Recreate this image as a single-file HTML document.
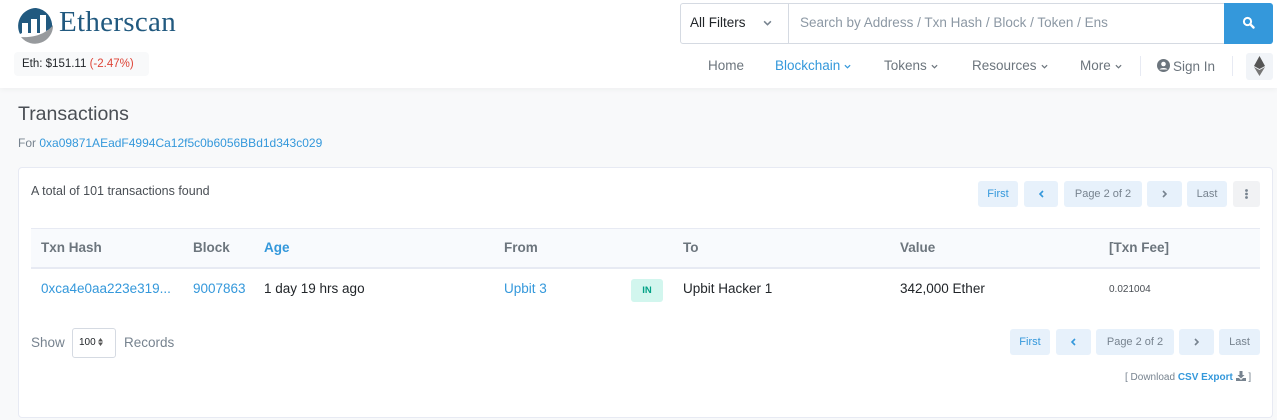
<!DOCTYPE html>
<html><head><meta charset="utf-8"><style>
*{box-sizing:border-box;margin:0;padding:0}
body{width:1277px;height:420px;overflow:hidden;background:#f8f9fa;font-family:"Liberation Sans",Arial,sans-serif;font-size:13.5px;color:#212529;position:relative}
.abs{position:absolute}
.hdr{position:absolute;left:0;top:0;width:1277px;height:88px;background:#fff;box-shadow:0 1px 6px rgba(0,0,0,.05)}
a{color:#3498db;text-decoration:none}
.btn{position:absolute;height:26px;background:#e7f1fb;border-radius:3px;color:#3498db;font-size:11px;line-height:26px;text-align:center}
.btn.g{color:#77838f}
.btn svg{margin-top:9px}
.card{position:absolute;left:18px;top:167px;width:1255px;height:251px;background:#fff;border:1px solid #e7eaf3;border-radius:4px}
.th{font-weight:bold;color:#6c757d;font-size:13.5px}
.chev{display:inline-block;vertical-align:middle;margin-left:4px}
</style></head><body>
<svg width="0" height="0" style="position:absolute"><defs><symbol id="cv" viewBox="0 0 8 5"><path d="M1 1l3 3 3-3" fill="none" stroke="currentColor" stroke-width="1.4"/></symbol></defs></svg>
<div class="hdr">
 <svg class="abs" style="left:17px;top:7px" width="38" height="38" viewBox="0 0 38 38">
  <path d="M19 1a18 18 0 0 0-16 26l2-1V16h6v10h3V12h6v14h3V8h6v16l6-3A18 18 0 0 0 19 1z" fill="#21597f"/>
  <path d="M4 30a18 18 0 0 0 32-12c-6 8-18 13-32 12z" fill="#979a9d"/>
 </svg>
 <div class="abs" style="left:59px;top:6px;font-family:'Liberation Serif',serif;font-size:29px;color:#21597f;letter-spacing:.3px">Etherscan</div>
 <div class="abs" style="left:14px;top:52px;width:135px;height:24px;background:#f8f9fa;border-radius:4px;font-size:11.5px;line-height:24px;padding-left:8px">Eth: $151.11 <span style="color:#de4437">(-2.47%)</span></div>
 <div class="abs" style="left:680px;top:3px;width:545px;height:41px;border:1px solid #d5dae2;border-radius:3px 0 0 3px"></div>
 <div class="abs" style="left:788px;top:3px;width:1px;height:41px;background:#d5dae2"></div>
 <div class="abs" style="left:690px;top:15px;font-size:13.5px">All Filters</div>
 <svg class="abs" style="left:763px;top:20px;color:#77838f" width="9" height="6"><use href="#cv"/></svg>
 <div class="abs" style="left:800px;top:15px;font-size:13.5px;color:#8c98a4">Search by Address / Txn Hash / Block / Token / Ens</div>
 <div class="abs" style="left:1224px;top:3px;width:49px;height:41px;background:#3498db;border-radius:0 3px 3px 0"></div>
 <svg class="abs" style="left:1242px;top:16px" width="13" height="13" viewBox="0 0 13 13"><circle cx="5.5" cy="5.5" r="3.6" fill="none" stroke="#fff" stroke-width="2"/><path d="M8.2 8.2l3.3 3.3" stroke="#fff" stroke-width="2.4" stroke-linecap="round"/></svg>
 <div class="abs" style="top:58px;left:708px;color:#6c757d">Home</div>
 <div class="abs" style="top:58px;left:775px;color:#3498db">Blockchain<svg class="chev" width="7" height="5"><use href="#cv"/></svg></div>
 <div class="abs" style="top:58px;left:884px;color:#6c757d">Tokens<svg class="chev" width="7" height="5"><use href="#cv"/></svg></div>
 <div class="abs" style="top:58px;left:972px;color:#6c757d">Resources<svg class="chev" width="7" height="5"><use href="#cv"/></svg></div>
 <div class="abs" style="top:58px;left:1080px;color:#6c757d">More<svg class="chev" width="7" height="5"><use href="#cv"/></svg></div>
 <div class="abs" style="left:1140px;top:56px;width:1px;height:20px;background:#e7eaf3"></div>
 <svg class="abs" style="left:1157px;top:59px" width="13" height="13" viewBox="0 0 13 13"><circle cx="6.5" cy="6.5" r="6.5" fill="#6c757d"/><circle cx="6.5" cy="5" r="2.3" fill="#fff"/><path d="M2.5 10.5c1-2 7-2 8 0" fill="#fff"/></svg>
 <div class="abs" style="top:59px;left:1173px;color:#6c757d">Sign In</div>
 <div class="abs" style="left:1232px;top:56px;width:1px;height:20px;background:#e7eaf3"></div>
 <div class="abs" style="left:1246px;top:53px;width:27px;height:27px;background:#f1f4f8;border-radius:3px"></div>
 <svg class="abs" style="left:1254px;top:56px" width="11" height="20" viewBox="0 0 11 20"><path d="M5.5 0L0 10l5.5 3 5.5-3z" fill="#555"/><path d="M5.5 14L0 11l5.5 9 5.5-9z" fill="#777"/></svg>
</div>
<div class="abs" style="left:18px;top:103px;font-size:19.5px;color:#4a4f55">Transactions</div>
<div class="abs" style="left:18px;top:136px;font-size:12px;color:#77838f">For <a>0xa09871AEadF4994Ca12f5c0b6056BBd1d343c029</a></div>
<div class="card">
 <div class="abs" style="left:12px;top:16px;font-size:12.5px;color:#4a4f55">A total of 101 transactions found</div>
 <div class="btn" style="left:959px;top:13px;width:40px">First</div>
 <div class="btn" style="left:1005px;top:13px;width:34px"><svg width="5" height="8" viewBox="0 0 5 8"><path d="M4 1L1 4l3 3" fill="none" stroke="#3498db" stroke-width="1.6"/></svg></div>
 <div class="btn g" style="left:1045px;top:13px;width:78px">Page 2 of 2</div>
 <div class="btn" style="left:1128px;top:13px;width:35px"><svg width="5" height="8" viewBox="0 0 5 8"><path d="M1 1l3 3-3 3" fill="none" stroke="#77838f" stroke-width="1.6"/></svg></div>
 <div class="btn g" style="left:1168px;top:13px;width:40px">Last</div>
 <div class="btn g" style="left:1214px;top:13px;width:27px;background:#f1f2f4"><svg width="3" height="10" viewBox="0 0 3 10" style="margin-top:8px"><circle cx="1.5" cy="1.5" r="1.4" fill="#77838f"/><circle cx="1.5" cy="5" r="1.4" fill="#77838f"/><circle cx="1.5" cy="8.5" r="1.4" fill="#77838f"/></svg></div>
 <div class="abs" style="left:12px;top:60px;width:1229px;height:41px;background:#f8fafd;border-top:1px solid #e7eaf3;border-bottom:2px solid #e7eaf3"></div>
 <div class="abs th" style="left:22px;top:72px">Txn Hash</div>
 <div class="abs th" style="left:174px;top:72px">Block</div>
 <div class="abs th" style="left:245px;top:72px;color:#3498db">Age</div>
 <div class="abs th" style="left:485px;top:72px">From</div>
 <div class="abs th" style="left:664px;top:72px">To</div>
 <div class="abs th" style="left:881px;top:72px">Value</div>
 <div class="abs th" style="left:1090px;top:72px">[Txn Fee]</div>
 <div class="abs" style="left:22px;top:113px"><a>0xca4e0aa223e319...</a></div>
 <div class="abs" style="left:174px;top:113px"><a>9007863</a></div>
 <div class="abs" style="left:245px;top:113px">1 day 19 hrs ago</div>
 <div class="abs" style="left:485px;top:113px"><a>Upbit 3</a></div>
 <div class="abs" style="left:612px;top:111px;width:32px;height:23px;background:#d2f6ee;color:#00a186;border-radius:3px;font-size:9.5px;font-weight:bold;text-align:center;line-height:23px">IN</div>
 <div class="abs" style="left:664px;top:113px">Upbit Hacker 1</div>
 <div class="abs" style="left:881px;top:113px">342,000 Ether</div>
 <div class="abs" style="left:1090px;top:116px;font-size:10px;color:#4a4f55">0.021004</div>
 <div class="abs" style="left:12px;top:167px;color:#77838f">Show</div>
 <div class="abs" style="left:53px;top:160px;width:44px;height:30px;border:1px solid #d5dae2;border-radius:3px;font-size:10px;line-height:28px;padding-left:6px">100 <svg width="5" height="8" viewBox="0 0 5 8" style="vertical-align:-1px"><path d="M0 3.5L2.5 0 5 3.5zM0 4.5L2.5 8 5 4.5z" fill="#555"/></svg></div>
 <div class="abs" style="left:105px;top:167px;color:#77838f">Records</div>
 <div class="btn" style="left:991px;top:161px;width:40px">First</div>
 <div class="btn" style="left:1037px;top:161px;width:35px"><svg width="5" height="8" viewBox="0 0 5 8"><path d="M4 1L1 4l3 3" fill="none" stroke="#3498db" stroke-width="1.6"/></svg></div>
 <div class="btn g" style="left:1077px;top:161px;width:78px">Page 2 of 2</div>
 <div class="btn g" style="left:1160px;top:161px;width:35px"><svg width="5" height="8" viewBox="0 0 5 8"><path d="M1 1l3 3-3 3" fill="none" stroke="#77838f" stroke-width="1.6"/></svg></div>
 <div class="btn g" style="left:1200px;top:161px;width:41px">Last</div>
 <div class="abs" style="left:1106px;top:203px;font-size:10px;color:#77838f">[ Download <b style="color:#3498db">CSV Export</b> <svg width="10" height="10" viewBox="0 0 10 10" style="vertical-align:-1px"><path d="M3.5 0h3v4h2L5 7.5 1.5 4h2z" fill="#77838f"/><path d="M0 7h3l2 2 2-2h3v3H0z" fill="#77838f"/></svg> ]</div>
</div>
</body></html>
